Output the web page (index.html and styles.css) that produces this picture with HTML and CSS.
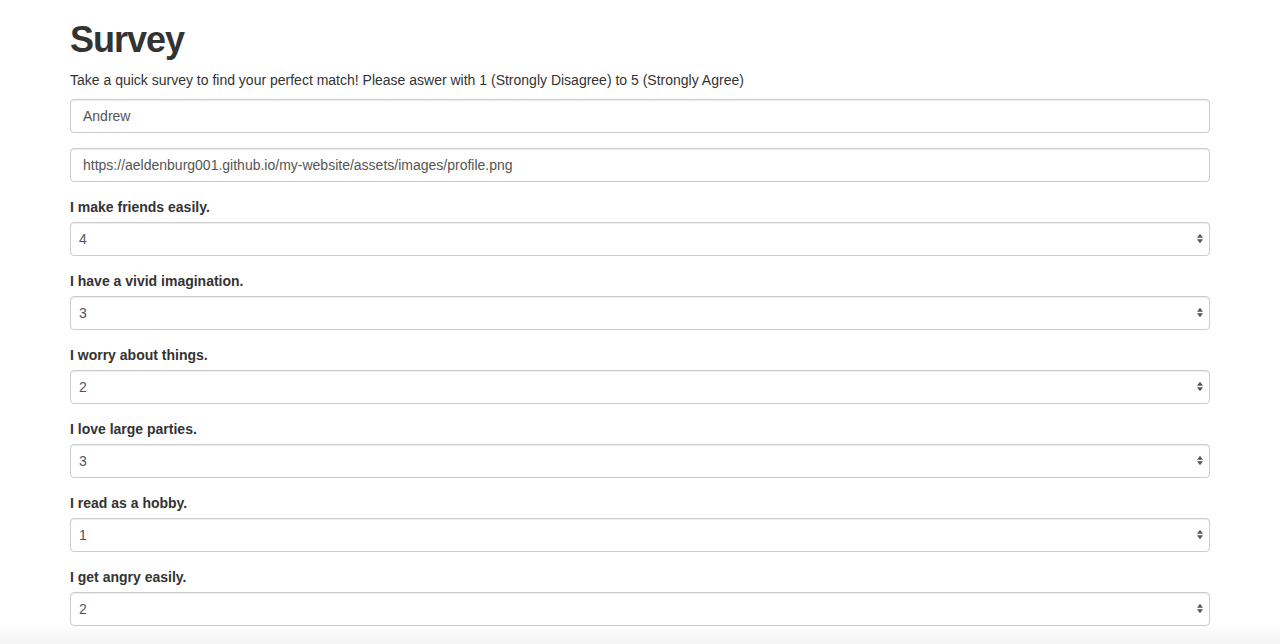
FILE: index.html
```html
<!DOCTYPE html>
<html lang="en">
<head>
<meta charset="utf-8">
<title>Survey</title>
<link rel="stylesheet" href="styles.css">
</head>
<body>
<div class="container">
  <h1 class="title">Survey</h1>
  <p class="intro">Take a quick survey to find your perfect match! Please aswer with 1 (Strongly Disagree) to 5 (Strongly Agree)</p>
  <form class="survey">
    <div class="form-group">
      <input class="form-control" type="text" value="Andrew">
    </div>
    <div class="form-group">
      <input class="form-control" type="text" value="https://aeldenburg001.github.io/my-website/assets/images/profile.png">
    </div>
    <div class="form-group">
      <label class="q-label">I make friends easily.</label>
      <select class="form-control select"><option>4</option></select>
    </div>
    <div class="form-group">
      <label class="q-label">I have a vivid imagination.</label>
      <select class="form-control select"><option>3</option></select>
    </div>
    <div class="form-group">
      <label class="q-label">I worry about things.</label>
      <select class="form-control select"><option>2</option></select>
    </div>
    <div class="form-group">
      <label class="q-label">I love large parties.</label>
      <select class="form-control select"><option>3</option></select>
    </div>
    <div class="form-group">
      <label class="q-label">I read as a hobby.</label>
      <select class="form-control select"><option>1</option></select>
    </div>
    <div class="form-group">
      <label class="q-label">I get angry easily.</label>
      <select class="form-control select"><option>2</option></select>
    </div>
  </form>
</div>
<div class="bottom-shade"></div>
</body>
</html>
```
FILE: styles.css
```css
html, body {
  margin: 0;
  padding: 0;
  background: #fff;
}
body {
  font-family: "Liberation Sans", Arial, sans-serif;
  font-size: 14px;
  line-height: 20px;
  color: #333;
}
.container {
  max-width: 1140px;
  margin: 0 auto;
  padding: 0 15px;
}
.title {
  font-size: 36px;
  font-weight: bold;
  letter-spacing: -1px;
  line-height: 39.6px;
  margin: 20px 0 10px;
  color: #333;
}
.intro {
  margin: 0 0 9px;
}
.form-group {
  margin-bottom: 15px;
}
.q-label {
  display: block;
  font-weight: bold;
  margin-bottom: 5px;
}
.form-control {
  display: block;
  box-sizing: border-box;
  width: 100%;
  height: 34px;
  padding: 6px 12px;
  font-family: inherit;
  font-size: 14px;
  line-height: 20px;
  color: #555;
  background: #fff;
  border: 1px solid #ccc;
  border-radius: 4px;
  box-shadow: inset 0 1px 1px rgba(0,0,0,0.075);
  margin: 0;
}
.select {
  -webkit-appearance: none;
  appearance: none;
  padding-left: 8px;
  background-image: url("data:image/svg+xml;utf8,<svg xmlns='http://www.w3.org/2000/svg' width='8' height='12' viewBox='0 0 8 12'><path d='M4 1.2 L7 5.3 L1 5.3 Z' fill='%23555'/><path d='M4 10.8 L7 6.7 L1 6.7 Z' fill='%23555'/></svg>");
  background-repeat: no-repeat;
  background-position: right 5px center;
  background-size: 8px 13px;
}
.bottom-shade {
  position: fixed;
  left: 0;
  right: 0;
  bottom: 0;
  height: 22px;
  pointer-events: none;
  background: linear-gradient(to bottom, rgba(0,0,0,0) 0%, rgba(0,0,0,0.045) 100%);
}
```
